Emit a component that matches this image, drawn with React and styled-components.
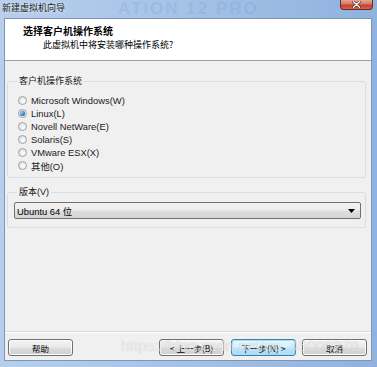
import React from "react";
import styled, { createGlobalStyle } from "styled-components";

const GlobalStyle = createGlobalStyle`
  html, body { margin: 0; padding: 0; }
  body {
    width: 377px; height: 367px; overflow: hidden;
    font-family: "Liberation Sans", "Noto Sans CJK SC", sans-serif;
  }
`;

const Window = styled.div`
  position: relative;
  width: 377px;
  height: 367px;
  box-sizing: border-box;
  display: flex;
  flex-direction: column;
  background: linear-gradient(90deg, #b7cfec 0%, #a6c3e7 45%, #8fb2de 100%);
`;

const TitleBar = styled.div`
  position: relative;
  height: 18px;
  flex: none;
  display: flex;
  align-items: flex-start;
  justify-content: space-between;
  overflow: hidden;
`;

const TitleText = styled.span`
  margin: 2px 0 0 2px;
  font-family: "Noto Sans CJK SC", sans-serif;
  font-size: 9px;
  line-height: 11px;
  color: #1e1e1e;
  text-shadow: 0 0 4px rgba(255,255,255,0.9);
  z-index: 1;
`;

const GlassText = styled.span`
  position: absolute;
  left: 118px;
  top: 0px;
  font-family: "Liberation Sans", sans-serif;
  font-weight: bold;
  font-size: 17px;
  line-height: 18px;
  letter-spacing: 2px;
  color: rgba(110, 150, 210, 0.22);
  white-space: nowrap;
`;

const CloseButton = styled.div`
  width: 33px;
  height: 10px;
  margin-right: 4px;
  box-sizing: border-box;
  border: 1px solid #6b2b24;
  border-top: none;
  border-radius: 0 0 4px 4px;
  background: linear-gradient(#e6a493 0%, #d77864 45%, #c2412c 55%, #d3624a 100%);
  display: flex;
  align-items: center;
  justify-content: center;
  z-index: 1;
`;

const ClientArea = styled.div`
  flex: 1;
  margin: 0 5px 6px 4px;
  border: 1px solid #7f95b2;
  background: #f0f0f0;
  display: flex;
  flex-direction: column;
  min-height: 0;
`;

const Header = styled.div`
  height: 41px;
  flex: none;
  background: #ffffff;
  border-bottom: 1px solid #a0a0a0;
  box-sizing: content-box;
  display: flex;
  flex-direction: column;
  font-family: "Noto Sans CJK SC", sans-serif;
`;

const HeaderTitle = styled.div`
  margin: 6px 0 0 18px;
  font-size: 10px;
  line-height: 12px;
  font-weight: bold;
  color: #000;
`;

const HeaderSub = styled.div`
  margin: 2px 0 0 38px;
  font-size: 9px;
  line-height: 12px;
  color: #000;
`;

const Body = styled.div`
  flex: 1;
  padding: 14px 5px 0 2px;
  display: flex;
  flex-direction: column;
  gap: 8px;
`;

const Group = styled.fieldset`
  margin: 0;
  border: 1px solid #d5dfe5;
  border-radius: 3px;
  padding: ${(p) => p.$pad};
  min-width: 0;
`;

const Legend = styled.legend`
  padding: 0 2px;
  margin-left: 3px;
  font-family: "Liberation Sans", "Noto Sans CJK SC", sans-serif;
  font-size: 9px;
  line-height: 12px;
  color: #1a1a1a;
`;

const RadioList = styled.div`
  display: flex;
  flex-direction: column;
`;

const RadioRow = styled.label`
  display: flex;
  align-items: center;
  height: 13px;
  gap: 4px;
  padding-left: 4px;
  font-family: "Liberation Sans", "Noto Sans CJK SC", sans-serif;
  font-size: 9.4px;
  color: #1a1a1a;
`;

const RadioDot = styled.span`
  width: 9px;
  height: 9px;
  box-sizing: border-box;
  border-radius: 50%;
  border: 1px solid #9aa3ac;
  background: radial-gradient(circle at 60% 65%, #ffffff 0%, #e4e6e8 60%, #cfd3d6 100%);
  display: flex;
  align-items: center;
  justify-content: center;
  &::after {
    content: "";
    display: ${(p) => (p.$checked ? "block" : "none")};
    width: 5px;
    height: 5px;
    border-radius: 50%;
    background: radial-gradient(circle at 35% 35%, #a7d8f7 0%, #2c7bc0 55%, #1a4f8a 100%);
  }
`;

const Select = styled.div`
  height: 17px;
  box-sizing: border-box;
  border: 1px solid #707070;
  border-radius: 2px;
  background: linear-gradient(#f3f3f3 0%, #ebebeb 48%, #dedede 52%, #d4d4d4 100%);
  display: flex;
  align-items: center;
  justify-content: space-between;
  padding: 0 5px 0 2px;
  font-family: "Liberation Sans", "Noto Sans CJK SC", sans-serif;
  font-size: 9.4px;
  color: #000;
`;

const Footer = styled.div`
  flex: none;
  border-top: 1px solid #d9d9d9;
  box-shadow: inset 0 1px 0 #ffffff;
  padding: 7px 4px 4px 3px;
  display: flex;
  align-items: center;
`;

const Button = styled.div`
  width: 65px;
  height: 17px;
  box-sizing: border-box;
  margin-left: ${(p) => p.$ml || 0}px;
  border: 1px solid ${(p) => (p.$default ? "#3c7fb1" : "#707070")};
  border-radius: 3px;
  background: ${(p) =>
    p.$default
      ? "linear-gradient(#eaf6fd 0%, #d9f0fc 48%, #bee6fd 52%, #a7d9f5 100%)"
      : "linear-gradient(#f2f2f2 0%, #ebebeb 48%, #dddddd 52%, #cfcfcf 100%)"};
  box-shadow: inset 0 0 0 1px ${(p) => (p.$default ? "#9fe0fb" : "#fcfcfc")};
  display: flex;
  align-items: center;
  justify-content: center;
  font-family: "Noto Sans CJK SC", "Liberation Sans", sans-serif;
  font-size: 8.5px;
  color: #000;
  white-space: nowrap;
`;

const Spacer = styled.div`
  flex: 1;
`;

const Watermark = styled.div`
  position: absolute;
  left: 121px;
  top: 337px;
  font-family: "Liberation Sans", sans-serif;
  font-size: 15.5px;
  color: rgba(255, 255, 255, 0.55);
  text-shadow: 0 0 1px rgba(120, 120, 120, 0.35);
  white-space: nowrap;
  pointer-events: none;
`;

const options = [
  "Microsoft Windows(W)",
  "Linux(L)",
  "Novell NetWare(E)",
  "Solaris(S)",
  "VMware ESX(X)",
  "其他(O)",
];

export default function App() {
  return (
    <>
      <GlobalStyle />
      <Window>
        <TitleBar>
          <GlassText>ATION 12 PRO</GlassText>
          <TitleText>新建虚拟机向导</TitleText>
          <CloseButton>
            <svg width="9" height="7" viewBox="0 0 9 7">
              <path d="M1.5 0.8 L7.5 6.2 M7.5 0.8 L1.5 6.2" stroke="#4a1a14" strokeWidth="2.6" strokeLinecap="round" />
              <path d="M1.5 0.8 L7.5 6.2 M7.5 0.8 L1.5 6.2" stroke="#ffffff" strokeWidth="1.5" strokeLinecap="round" />
            </svg>
          </CloseButton>
        </TitleBar>
        <ClientArea>
          <Header>
            <HeaderTitle>选择客户机操作系统</HeaderTitle>
            <HeaderSub>此虚拟机中将安装哪种操作系统?</HeaderSub>
          </Header>
          <Body>
            <Group $pad="7px 6px 5px 6px">
              <Legend>客户机操作系统</Legend>
              <RadioList>
                {options.map((o, i) => (
                  <RadioRow key={o}>
                    <RadioDot $checked={i === 1} />
                    {o}
                  </RadioRow>
                ))}
              </RadioList>
            </Group>
            <Group $pad="4px 4px 8px 6px">
              <Legend>版本(V)</Legend>
              <Select>
                <span>Ubuntu 64 位</span>
                <svg width="7" height="4" viewBox="0 0 7 4">
                  <path d="M0 0 H7 L3.5 4 Z" fill="#000" />
                </svg>
              </Select>
            </Group>
            <Spacer />
          </Body>
          <Footer>
            <Button>帮助</Button>
            <Spacer />
            <Button>&lt; 上一步(B)</Button>
            <Button $default $ml={7}>下一步(N) &gt;</Button>
            <Button $ml={6}>取消</Button>
          </Footer>
        </ClientArea>
        <Watermark>https://blog.csdn.net/qq_45006279</Watermark>
      </Window>
    </>
  );
}
